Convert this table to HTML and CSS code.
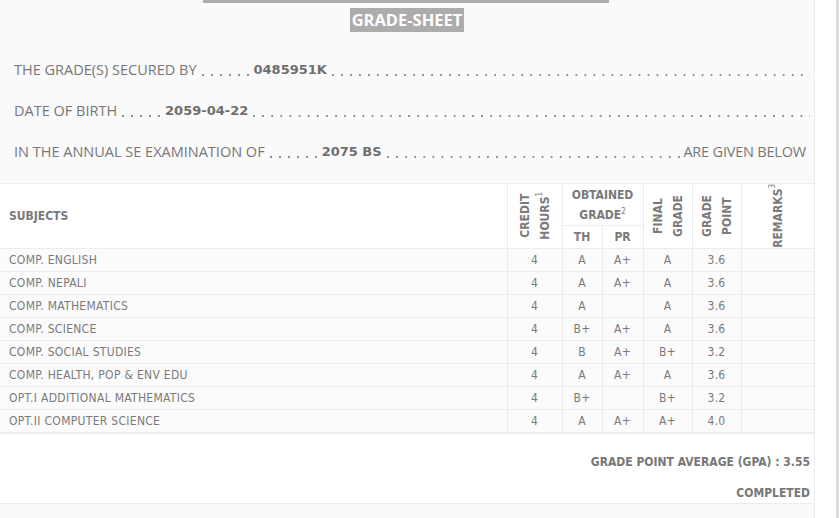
FILE: index.html
```html
<!DOCTYPE html>
<html>
<head>
<meta charset="utf-8">
<link rel="stylesheet" href="styles.css">
</head>
<body>
<div class="page">
  <div class="panel">
    <div class="topbar"></div>
    <div class="title-wrap"><span class="title">GRADE-SHEET</span></div>
    <div class="info">
      <div class="line"><span class="lbl">THE GRADE(S) SECURED BY</span><span class="dots d6"></span><b>0485951K</b><span class="dots fill"></span></div>
      <div class="line"><span class="lbl">DATE OF BIRTH</span><span class="dots d5"></span><b>2059-04-22</b><span class="dots fill"></span></div>
      <div class="line"><span class="lbl">IN THE ANNUAL SE EXAMINATION OF</span><span class="dots d6"></span><b>2075 BS</b><span class="dots fill"></span><span class="lbl end">ARE GIVEN BELOW</span></div>
    </div>
    <table class="grades">
      <colgroup>
        <col class="c-sub"><col class="c-cr"><col class="c-th"><col class="c-pr"><col class="c-fg"><col class="c-gp"><col class="c-rm">
      </colgroup>
      <thead>
        <tr class="h1">
          <th rowspan="2" class="subj">SUBJECTS</th>
          <th rowspan="2" class="vcell"><span class="vert">CREDIT<br>HOURS<sup>1</sup></span></th>
          <th colspan="2" class="obt">OBTAINED<br>GRADE<sup>2</sup></th>
          <th rowspan="2" class="vcell"><span class="vert">FINAL<br>GRADE</span></th>
          <th rowspan="2" class="vcell"><span class="vert">GRADE<br>POINT</span></th>
          <th rowspan="2" class="vcell"><span class="vert">REMARKS<sup>3</sup></span></th>
        </tr>
        <tr class="h2">
          <th class="sub">TH</th>
          <th class="sub">PR</th>
        </tr>
      </thead>
      <tbody>
        <tr><td class="subj">COMP. ENGLISH</td><td>4</td><td>A</td><td>A+</td><td>A</td><td>3.6</td><td></td></tr>
        <tr><td class="subj">COMP. NEPALI</td><td>4</td><td>A</td><td>A+</td><td>A</td><td>3.6</td><td></td></tr>
        <tr><td class="subj">COMP. MATHEMATICS</td><td>4</td><td>A</td><td></td><td>A</td><td>3.6</td><td></td></tr>
        <tr><td class="subj">COMP. SCIENCE</td><td>4</td><td>B+</td><td>A+</td><td>A</td><td>3.6</td><td></td></tr>
        <tr><td class="subj">COMP. SOCIAL STUDIES</td><td>4</td><td>B</td><td>A+</td><td>B+</td><td>3.2</td><td></td></tr>
        <tr><td class="subj">COMP. HEALTH, POP &amp; ENV EDU</td><td>4</td><td>A</td><td>A+</td><td>A</td><td>3.6</td><td></td></tr>
        <tr><td class="subj">OPT.I ADDITIONAL MATHEMATICS</td><td>4</td><td>B+</td><td></td><td>B+</td><td>3.2</td><td></td></tr>
        <tr><td class="subj">OPT.II COMPUTER SCIENCE</td><td>4</td><td>A</td><td>A+</td><td>A+</td><td>4.0</td><td></td></tr>
      </tbody>
    </table>
    <div class="summary">
      <div class="gpa">GRADE POINT AVERAGE (GPA) : 3.55</div>
      <div class="status">COMPLETED</div>
    </div>
  </div>
  <div class="side"></div>
</div>
</body>
</html>
```
FILE: styles.css
```css
html, body { margin: 0; padding: 0; }
body { background: #fff; width: 839px; height: 518px; overflow: hidden; }
.page { display: flex; height: 518px; }
.panel {
  width: 814px;
  border-right: 1px solid #ececec;
  background: #fafafa;
  flex: none;
}
.side { flex: 1; border-right: 3px solid #dcdcdc; }
.topbar { width: 406px; height: 3px; background: #acacac; margin-left: 203px; }
.title-wrap { text-align: center; padding-top: 5px; }
.title {
  display: inline-block;
  background: #acacac;
  color: #fff;
  font-family: "Open Sans", sans-serif;
  font-weight: 700;
  font-size: 16.5px;
  line-height: 24px;
  padding: 0 2px;
}
.info {
  font-family: "Open Sans", sans-serif;
  font-size: 14.5px;
  color: #777;
  padding: 28px 8px 0 14px;
  height: 123px;
}
.line { display: flex; white-space: nowrap; height: 41px; line-height: 20px; }
.line b { color: #6f6f6f; font-family: "DejaVu Sans", sans-serif; font-size: 13px; }
.dots {
  height: 20px;
  background-image: linear-gradient(90deg, #8b909a 2px, transparent 2px);
  background-size: 9px 2px;
  background-repeat: repeat-x;
  background-position: 0 14px;
  margin: 0 5px 0 5px;
}
.dots.d6 { width: 47px; }
.dots.d5 { width: 38px; }
.dots.fill {
  flex: 1;
  background-repeat: space no-repeat;
  margin-right: -4px;
}
.line .lbl.end { margin-left: 0; letter-spacing: -0.2px; }
.grades {
  border-collapse: collapse;
  table-layout: fixed;
  width: 814px;
  font-family: "DejaVu Sans Condensed", "DejaVu Sans", sans-serif;
  font-size: 12px;
  color: #7a7a7a;
}
.c-sub { width: 507px; }
.c-cr { width: 55px; }
.c-th { width: 40px; }
.c-pr { width: 41px; }
.c-fg { width: 49px; }
.c-gp { width: 49px; }
.c-rm { width: 73px; }
.grades th, .grades td { border: 1px solid #ececec; padding: 0; text-align: center; }
.grades tr > :first-child { border-left: none; }
.grades tr > :last-child { border-right: none; }
.grades thead { background: #fff; }
.grades th { font-weight: 700; color: #7a7a7a; font-size: 12px; line-height: 14px; }
.grades th.subj { text-align: left; padding-left: 9px; }
.grades tr.h1 { height: 42px; }
.grades tr.h2 { height: 23px; }
.grades th.obt { line-height: 20px; }
.grades sup { font-size: 8px; font-weight: 400; vertical-align: 5px; line-height: 0; }
.vert {
  display: block;
  width: max-content;
  margin: 0 auto;
  writing-mode: vertical-rl;
  transform: rotate(180deg);
  line-height: 20px;
  text-align: center;
}
.grades tbody tr { background: #fbfbfb; height: 23px; }
.grades td { letter-spacing: 0.3px; }
.grades td.subj { text-align: left; padding-left: 9px; }
.summary {
  background: #fff;
  border-top: 1px solid #ececec;
  border-bottom: 1px solid #ececec;
  height: 69px;
  text-align: right;
  padding-right: 4px;
  font-family: "DejaVu Sans Condensed", "DejaVu Sans", sans-serif;
  font-size: 12px;
  font-weight: 700;
  color: #777;
}
.gpa { padding-top: 20px; line-height: 16px; }
.status { padding-top: 15px; line-height: 16px; }
```
